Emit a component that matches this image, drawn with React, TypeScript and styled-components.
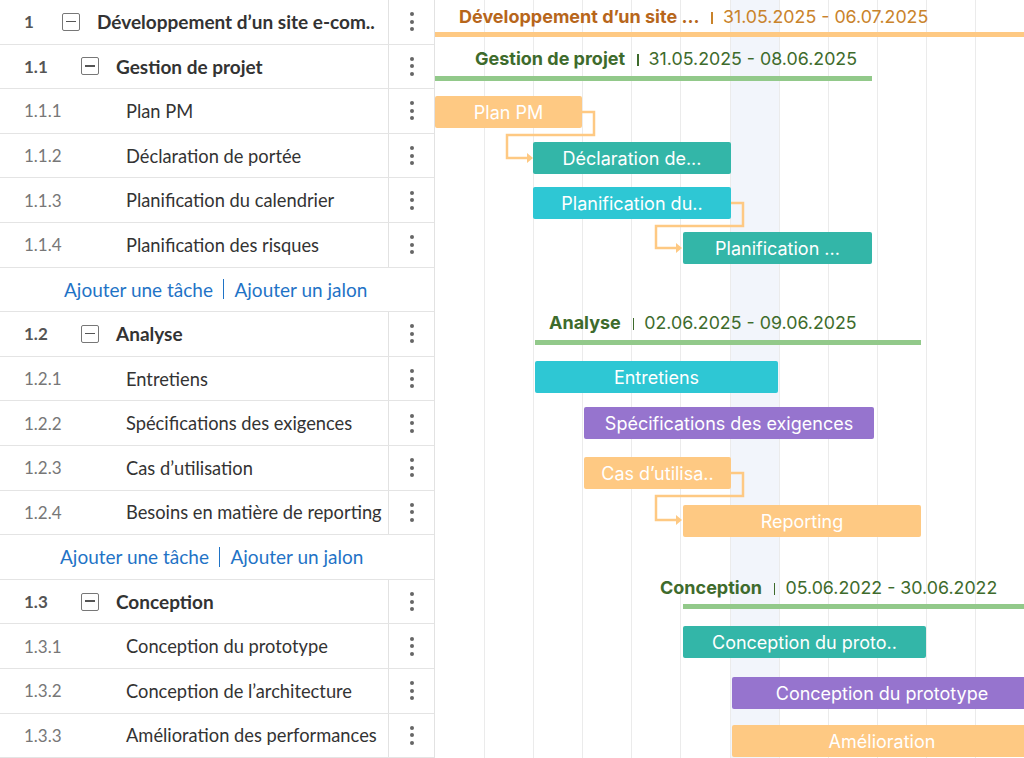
import React from "react";
import styled, { createGlobalStyle } from "styled-components";

const G = createGlobalStyle`
  body { margin:0; background:#fff; font-family: Lato, "Noto Sans", sans-serif; overflow:hidden; }
`;
const RH = 44.6;
const Page = styled.div`display:flex;width:1024px;height:758px;overflow:hidden;`;
const Left = styled.div`width:435px;flex:none;border-right:1px solid #e2e2e2;box-sizing:border-box;`;
const Row = styled.div`display:flex;align-items:center;height:${RH}px;box-sizing:border-box;border-bottom:1px solid #e4e4e4;`;
const Num = styled.div<{ b?: boolean }>`width:24px;padding-left:24px;flex:none;font-size:17px;color:${p => (p.b ? "#555" : "#777")};font-weight:${p => (p.b ? 700 : 400)};`;
const Name = styled.div<{ indent: number; b?: boolean }>`flex:1;display:flex;align-items:center;gap:17px;padding-left:${p => p.indent}px;font-size:${p => (p.b ? 19 : 18.3)}px;font-weight:${p => (p.b ? 700 : 400)};color:#333;white-space:nowrap;overflow:hidden;`;
const Box = styled.span`width:18px;height:18px;border:1.5px solid #777;box-sizing:border-box;border-radius:2px;position:relative;flex:none;
  &::after{content:"";position:absolute;left:3px;right:3px;top:6.75px;height:1.5px;background:#555;}`;
const Dots = styled.div`width:45px;height:100%;flex:none;border-left:1px solid #e2e2e2;display:flex;flex-direction:column;align-items:center;justify-content:center;gap:3.5px;
  span{width:4px;height:4px;border-radius:50%;background:#666;}`;
const Add = styled.div<{ pl: number }>`flex:1;padding-left:${p => p.pl}px;display:flex;align-items:center;gap:10px;font-size:19px;color:#1f73c6;
  i{width:1.5px;height:20px;background:#1f73c6;}`;
const Chart = styled.div`position:relative;flex:1;height:758px;
  background: linear-gradient(#f2f5fb,#f2f5fb) 296px 0/49px 100% no-repeat;`;
const VLine = styled.div`position:absolute;top:0;bottom:0;width:1px;background:#ebebeb;`;
const Bar = styled.div<{ c: string }>`position:absolute;height:32px;border-radius:2px;background:${p => p.c};color:#fff;font-family:Inter,sans-serif;font-size:18px;display:flex;align-items:center;justify-content:center;white-space:nowrap;overflow:hidden;`;
const Sum = styled.div<{ c: string }>`position:absolute;height:5px;background:${p => p.c};`;
const SumLabel = styled.div<{ c: string; d: string }>`position:absolute;white-space:nowrap;font-family:Inter,sans-serif;font-size:17.8px;color:${p => p.d};
  b{font-weight:700;color:${p => p.c};margin-right:12px;font-size:18px;}
  i{display:inline-block;width:1.5px;height:12px;background:${p => p.d};margin-right:10px;vertical-align:-1px;}`;

type R = { n: string; t: string; lvl: number } | { add: number };
const rows: R[] = [
  { n: "1", t: "Développement d’un site e-com..", lvl: 0 },
  { n: "1.1", t: "Gestion de projet", lvl: 1 },
  { n: "1.1.1", t: "Plan PM", lvl: 2 },
  { n: "1.1.2", t: "Déclaration de portée", lvl: 2 },
  { n: "1.1.3", t: "Planification du calendrier", lvl: 2 },
  { n: "1.1.4", t: "Planification des risques", lvl: 2 },
  { add: 64 },
  { n: "1.2", t: "Analyse", lvl: 1 },
  { n: "1.2.1", t: "Entretiens", lvl: 2 },
  { n: "1.2.2", t: "Spécifications des exigences", lvl: 2 },
  { n: "1.2.3", t: "Cas d’utilisation", lvl: 2 },
  { n: "1.2.4", t: "Besoins en matière de reporting", lvl: 2 },
  { add: 60 },
  { n: "1.3", t: "Conception", lvl: 1 },
  { n: "1.3.1", t: "Conception du prototype", lvl: 2 },
  { n: "1.3.2", t: "Conception de l’architecture", lvl: 2 },
  { n: "1.3.3", t: "Amélioration des performances", lvl: 2 },
];
const indents = [14, 33, 51];

const O = "#fec983", T = "#33b6a8", C = "#2ec7d4", P = "#9674ce", GR = "#92c98a";
const bars = [
  { x: 0, w: 147, y: 96, c: O, t: "Plan PM" },
  { x: 98, w: 198, y: 142, c: T, t: "Déclaration de..." },
  { x: 98, w: 198, y: 187, c: C, t: "Planification du.." },
  { x: 248, w: 189, y: 232, c: T, t: "Planification ..." },
  { x: 100, w: 243, y: 361, c: C, t: "Entretiens" },
  { x: 149, w: 290, y: 407, c: P, t: "Spécifications des exigences" },
  { x: 149, w: 147, y: 457, c: O, t: "Cas d’utilisa.." },
  { x: 248, w: 238, y: 505, c: O, t: "Reporting" },
  { x: 248, w: 243, y: 626, c: T, t: "Conception du proto.." },
  { x: 297, w: 300, y: 677, c: P, t: "Conception du prototype" },
  { x: 297, w: 300, y: 725, c: O, t: "Amélioration" },
];
const Arrow = ({ x1, y1, y2 }: { x1: number; y1: number; y2: number }) => (
  <svg style={{ position: "absolute", left: 0, top: 0, overflow: "visible" }} width="1" height="1">
    <path d={`M${x1} ${y1} H${x1 + 12} V${y1 + 23} H${x1 - 75} V${y2} H${x1 - 52}`} fill="none" stroke={O} strokeWidth="2.5" />
    <path d={`M${x1 - 55} ${y2 - 5} L${x1 - 49} ${y2} L${x1 - 55} ${y2 + 5}Z`} fill={O} />
  </svg>
);

export default function App() {
  return (
    <Page>
      <G />
      <Left>
        {rows.map((r, i) =>
          "add" in r ? (
            <Row key={i}>
              <Add pl={r.add}>Ajouter une tâche <i /> Ajouter un jalon</Add>
            </Row>
          ) : (
            <Row key={i}>
              <Num b={r.lvl < 2}>{r.n}</Num>
              <Name indent={indents[r.lvl] + (r.lvl === 2 ? 27 : 0)} b={r.lvl < 2}>
                {r.lvl < 2 && <Box />}
                {r.t}
              </Name>
              <Dots><span /><span /><span /></Dots>
            </Row>
          )
        )}
      </Left>
      <Chart>
        {Array.from({ length: 12 }, (_, i) => <VLine key={i} style={{ left: 49 + i * 49.1 }} />)}
        <SumLabel c="#b7661b" d="#c9832b" style={{ left: 24, top: 6 }}><b>Développement d’un site ...</b><i />31.05.2025 - 06.07.2025</SumLabel>
        <Sum c={O} style={{ left: 0, width: 600, top: 32 }} />
        <SumLabel c="#3e6b2c" d="#3e6b2c" style={{ left: 40, top: 48 }}><b>Gestion de projet</b><i />31.05.2025 - 08.06.2025</SumLabel>
        <Sum c={GR} style={{ left: 0, width: 437, top: 76 }} />
        <SumLabel c="#3e6b2c" d="#3e6b2c" style={{ left: 114, top: 312 }}><b>Analyse</b><i />02.06.2025 - 09.06.2025</SumLabel>
        <Sum c={GR} style={{ left: 100, width: 386, top: 340 }} />
        <SumLabel c="#3e6b2c" d="#3e6b2c" style={{ left: 225, top: 577 }}><b>Conception</b><i />05.06.2022 - 30.06.2022</SumLabel>
        <Sum c={GR} style={{ left: 248, width: 360, top: 604 }} />
        <Arrow x1={147} y1={112} y2={158} />
        <Arrow x1={296} y1={203} y2={248} />
        <Arrow x1={296} y1={473} y2={520} />
        {bars.map((b, i) => (
          <Bar key={i} c={b.c} style={{ left: b.x, width: b.w, top: b.y }}>{b.t}</Bar>
        ))}
      </Chart>
    </Page>
  );
}
